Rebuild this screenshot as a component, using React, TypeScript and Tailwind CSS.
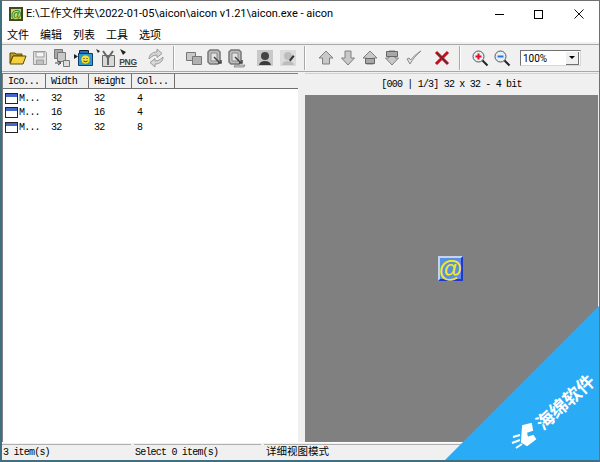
const ui = { fontFamily: 'Roboto, "Noto Sans CJK SC", sans-serif' }
const menu = { fontFamily: '"Noto Sans CJK SC", sans-serif' }
const mono = { fontFamily: '"Liberation Mono", "Noto Sans CJK SC", monospace' }

function TitleIcon() {
  return (
    <div
      className="flex h-[14px] w-[14px] shrink-0 items-center justify-center border-2 border-[#3c4a20] bg-[#d8d860] text-[11px] font-bold leading-none text-[#1c7a2c]"
      style={{ fontFamily: '"Liberation Sans", sans-serif' }}
    >
      @
    </div>
  )
}

function PreviewIcon() {
  return (
    <div
      className="relative flex h-[25px] w-[25px] shrink-0 items-center justify-center border-t-2 border-l-2 border-t-[#c4d4ee] border-l-[#c4d4ee] border-b-2 border-r-2 border-b-[#2438c8] border-r-[#2438c8] bg-[#5c8ee6] text-[24px] font-bold leading-none text-[#f4ea20]"
      style={{ fontFamily: '"Liberation Sans", sans-serif' }}
    >
      @
    </div>
  )
}

function Folder() {
  return (
    <svg width="18" height="16" viewBox="0 0 18 16">
      <path d="M1 3h5l1 1h6v2H4L1 13z" fill="#c8a020" stroke="#5a4a00" />
      <path d="M1 14l3-8h13l-3 8z" fill="#f5d040" stroke="#5a4a00" />
    </svg>
  )
}

function Save() {
  return (
    <svg width="16" height="16" viewBox="0 0 16 16">
      <path d="M1.500 1.500h12l1 1v12h-13z" fill="#e0e0e0" stroke="#9c9c9c" />
      <path d="M4 2h8v5H4z" fill="#f4f4f4" stroke="#9c9c9c" />
      <path d="M4.500 10h7v4.500h-7z" fill="#c0c0c0" stroke="#9c9c9c" />
    </svg>
  )
}

function SaveAll() {
  return (
    <svg width="18" height="20" viewBox="0 0 18 20">
      <path d="M1.500 1.500h8v9h-8z" fill="#a8a8a8" stroke="#777" />
      <path d="M4.500 4.500h8v9h-8z" fill="#c8c8c8" stroke="#777" />
      <path d="M10.500 12.500h6v6h-6z" fill="#ddd" stroke="#777" />
      <path d="M2 15h6M5 13l3 2-3 2" fill="none" stroke="#444" />
    </svg>
  )
}

function Smile() {
  return (
    <svg width="20" height="18" viewBox="0 0 20 18">
      <path d="M0 5l4 2.500L0 10z" fill="#222" />
      <path d="M5.500 1.500h9v4h-9z" fill="#1c6fb8" stroke="#123" />
      <path d="M4.500 4.500h14v12h-14z" fill="#2a9ad8" stroke="#0b3c70" />
      <circle cx="11.500" cy="10.500" r="4.500" fill="#f2e23c" stroke="#7a7000" strokeWidth="0.500" />
      <path d="M9.500 9.500h1M12.500 9.500h1M9.500 12q2 1.500 4 0" fill="none" stroke="#333" />
    </svg>
  )
}

function Import() {
  return (
    <svg width="20" height="20" viewBox="0 0 20 20">
      <path d="M0 1l4 2-2 2z" fill="#222" />
      <path d="M6.500 7.500h12v11h-12z" fill="#d8d8d8" stroke="#666" />
      <path d="M7 3l5 7 5-7M12 10v7" fill="none" stroke="#666" strokeWidth="2" />
    </svg>
  )
}

function Png() {
  return (
    <div className="flex w-[18px] flex-col items-center">
      <svg width="18" height="8" viewBox="0 0 18 8">
        <path d="M1 0l6 3-3 3z" fill="#222" />
      </svg>
      <span className="text-[8.500px] font-bold leading-[10px] tracking-[-0.3px] text-[#444] underline" style={{ fontFamily: '"Liberation Sans", sans-serif' }}>
        PNG
      </span>
    </div>
  )
}

function Reload() {
  return (
    <svg width="20" height="20" viewBox="0 0 20 20">
      <path d="M3 11c0-4 3-7 8-7V1l5 4.500-5 4V7c-3 0-5 1-8 4z" fill="#d8d8d8" stroke="#9a9a9a" />
      <path d="M17 9c0 4-3 7-8 7v3l-5-4.500 5-4V13c3 0 5-1 8-4z" fill="#d8d8d8" stroke="#9a9a9a" />
    </svg>
  )
}

function Copy() {
  return (
    <svg width="18" height="16" viewBox="0 0 18 16">
      <path d="M1.500 2.500h9v8h-9z" fill="#c8c8c8" stroke="#777" />
      <path d="M7.500 6.500h9v8h-9z" fill="#b0b0b0" stroke="#777" />
    </svg>
  )
}

function Shot({ tray }: { tray?: boolean }) {
  return (
    <svg width="20" height="20" viewBox="0 0 20 20">
      <path d="M3 4l2-2h8l2 2v10l-2 2H5l-2-2z" fill="#bdbdbd" stroke="#777" strokeWidth="1.500" />
      <path d="M6 5h6v8H6z" fill="#e4e4e4" stroke="#888" />
      <path d="M9 9l6 6M13 15h3v-3" fill="none" stroke="#444" strokeWidth="1.500" />
      {tray && <path d="M9 17h10l-1 2H8z" fill="#ccc" stroke="#777" strokeWidth="0.700" />}
    </svg>
  )
}

function Person({ light }: { light?: boolean }) {
  return (
    <div className={light ? 'flex h-4 w-4 items-end justify-center bg-[#dcdcdc]' : 'flex h-4 w-4 items-end justify-center bg-[#c8c8c8]'}>
      <svg width="16" height="16" viewBox="0 0 16 16">
        <circle cx="8" cy="6" r="4" fill={light ? '#bdbdbd' : '#444'} />
        <path d="M2 15q1-4 6-4t6 4z" fill={light ? '#bdbdbd' : '#3a3a3a'} />
        {light && <path d="M9 10l4-5 1.500 1.500-4 5z" fill="#333" />}
      </svg>
    </div>
  )
}

function Arrow({ down, box }: { down?: boolean; box?: boolean }) {
  const up = 'M8 1L1 8h3.500v6h7V8H15z'
  const dn = 'M5 1h6v7h3.500L8 15 1.500 8H5z'
  return (
    <svg width="16" height="16" viewBox="0 0 16 16">
      <path d={down ? dn : up} fill="#c8c8c8" stroke="#808080" />
      {box && <path d={down ? 'M2.500 1.500h11v5h-11z' : 'M3.500 8.500h9v5h-9z'} fill="#a8a8a8" stroke="#666" />}
    </svg>
  )
}

function Check() {
  return (
    <svg width="16" height="16" viewBox="0 0 16 16">
      <path d="M1 9l3 5C7 9 10 5 15 1 10 4 7 7 4.500 10L3 8z" fill="#e0e0e0" stroke="#8c8c8c" />
    </svg>
  )
}

function Cross() {
  return (
    <svg width="16" height="16" viewBox="0 0 16 16">
      <path d="M2 2l12 12M14 2L2 14" stroke="#c01020" strokeWidth="3" />
      <path d="M3 3l11 11" stroke="#333" strokeWidth="0.800" />
    </svg>
  )
}

function Zoom({ plus }: { plus?: boolean }) {
  return (
    <svg width="17" height="17" viewBox="0 0 17 17">
      <circle cx="6.500" cy="6.500" r="5.500" fill="#e8eef5" stroke="#555" />
      <path d="M3.500 6.500h6" stroke={plus ? '#e01020' : '#2878e0'} strokeWidth="2" />
      {plus && <path d="M6.500 3.500v6" stroke="#e01020" strokeWidth="2" />}
      <path d="M10.500 10.500l5 5" stroke="#222" strokeWidth="2" />
    </svg>
  )
}

function Tool({ children, w = 'w-[22px]', ml = '' }: { children: React.ReactNode; w?: string; ml?: string }) {
  return <div className={`flex h-[22px] shrink-0 items-center justify-center ${w} ${ml}`}>{children}</div>
}

function Sep({ ml }: { ml: string }) {
  return <div className={`h-6 w-[2px] shrink-0 border-l border-r border-l-[#a8a8a8] border-r-white ${ml}`} />
}

function RowIcon() {
  return (
    <div className="h-[11px] w-[13px] shrink-0 border border-[#222] bg-white">
      <div className="h-[3px] bg-[#4468c8]" />
    </div>
  )
}

const rows = [
  ['32', '32', '4'],
  ['16', '16', '4'],
  ['32', '32', '8'],
]

const headers = ['Ico...', 'Width', 'Height', 'Col...']

export default function App() {
  return (
    <div className="relative flex h-[462px] w-[600px] flex-col overflow-hidden border-t border-l-2 border-r border-b-2 border-t-[#707070] border-l-[#3f6f80] border-r-[#707070] border-b-[#3f6f80] bg-[#f0f0f0] text-black">
      {/* title bar */}
      <div className="flex h-[26px] shrink-0 items-center bg-white pl-[7px] text-[11px]" style={ui}>
        <TitleIcon />
        <span className="ml-[3px] whitespace-nowrap">E:\工作文件夹\2022-01-05\aicon\aicon v1.21\aicon.exe - aicon</span>
        <div className="ml-auto flex items-center">
          <div className="mr-[30px] h-px w-[9px] bg-black" />
          <div className="mr-[31px] h-[9px] w-[9px] border border-black" />
          <svg width="10" height="10" viewBox="0 0 10 10" className="mr-[15px]">
            <path d="M0.500 0.500l9 9M9.500 0.500l-9 9" stroke="#111" />
          </svg>
        </div>
      </div>

      {/* menu */}
      <div className="flex h-[15px] shrink-0 items-center gap-[9px] bg-white pl-[5px] text-[11px]" style={menu}>
        {['文件', '编辑', '列表', '工具', '选项'].map(m => (
          <span key={m} className="w-[24px] leading-none">{m}</span>
        ))}
      </div>

      {/* toolbar */}
      <div className="mt-[2px] flex h-[28px] shrink-0 items-center border-t border-b border-t-[#a8a8a8] border-b-[#a8a8a8] bg-[#f0f0f0] pl-[5px]">
        <Tool><Folder /></Tool>
        <Tool><Save /></Tool>
        <Tool><SaveAll /></Tool>
        <Tool><Smile /></Tool>
        <Tool><Import /></Tool>
        <Tool><Png /></Tool>
        <Tool ml="ml-[6px]"><Reload /></Tool>
        <Sep ml="ml-[6px]" />
        <Tool w="w-[21px]" ml="ml-[8px]"><Copy /></Tool>
        <Tool w="w-[21px]"><Shot /></Tool>
        <Tool w="w-[21px]"><Shot tray /></Tool>
        <Tool w="w-[23px]" ml="ml-[7px]"><Person /></Tool>
        <Tool w="w-[23px]"><Person light /></Tool>
        <Sep ml="ml-[5px]" />
        <Tool ml="ml-[9px]"><Arrow /></Tool>
        <Tool><Arrow down /></Tool>
        <Tool><Arrow box /></Tool>
        <Tool><Arrow down box /></Tool>
        <Tool><Check /></Tool>
        <Tool ml="ml-[6px]"><Cross /></Tool>
        <Sep ml="ml-[6px]" />
        <Tool ml="ml-[8px]"><Zoom plus /></Tool>
        <Tool><Zoom /></Tool>
        <div className="ml-[7px] flex h-[16px] w-[61px] items-center justify-between border border-t-[#707070] border-l-[#707070] border-r-[#d8d8d8] border-b-[#d8d8d8] bg-white pl-[2px] pr-px text-[10px]" style={ui}>
          <span>100%</span>
          <div className="flex h-[13px] w-[13px] items-center justify-center border-r border-b border-r-[#707070] border-b-[#707070] bg-[#f0f0f0]">
            <div className="h-0 w-0 border-x-[3px] border-t-[3px] border-x-transparent border-t-black" />
          </div>
        </div>
      </div>

      {/* panels */}
      <div className="flex min-h-0 flex-1 pt-px">
        <div className="flex w-[296px] shrink-0 flex-col border-t border-l border-t-[#808080] border-l-[#808080] bg-white text-[10px] tracking-[-0.8px]" style={mono}>
          <div className="flex h-[15px] shrink-0 bg-[#f0f0f0]">
            {headers.map(h => (
              <div key={h} className="flex w-[43px] items-center border-r border-b border-r-[#707070] border-b-[#707070] pl-[5px]">
                {h}
              </div>
            ))}
            <div className="flex-1 border-b border-b-[#707070]" />
          </div>
          <div className="pt-[2px]">
            {rows.map((r, i) => (
              <div key={i} className="flex h-[14.500px] items-center">
                <div className="flex w-[43px] items-center gap-px pl-[2px]">
                  <RowIcon />
                  <span>M...</span>
                </div>
                {r.map((c, j) => (
                  <div key={j} className="w-[43px] pl-[5px]">{c}</div>
                ))}
              </div>
            ))}
          </div>
        </div>

        <div className="ml-[7px] mr-px flex min-w-0 flex-1 flex-col">
          <div className="flex h-[22px] shrink-0 items-center justify-center border-t border-t-[#d0d0d0] bg-[#f0f0f0] text-[10px] tracking-[-0.8px]" style={mono}>
            [000 | 1/3] 32 x 32 - 4 bit
          </div>
          <div className="flex flex-1 items-center justify-center bg-[#808080]">
            <div className="mr-[2px]">
              <PreviewIcon />
            </div>
          </div>
        </div>
      </div>

      {/* status bar */}
      <div className="flex h-[18px] shrink-0 gap-[3px] border-t border-t-white pt-px text-[10px] tracking-[-0.8px]" style={mono}>
        <div className="flex w-[129px] items-center border-t border-t-[#b0b0b0] pl-px">3 item(s)</div>
        <div className="flex w-[127px] items-center border-t border-t-[#b0b0b0] pl-px">Select 0 item(s)</div>
        <div className="flex flex-1 items-center border-t border-t-[#b0b0b0] pl-[2px] text-[10.500px] tracking-normal">详细视图模式</div>
      </div>

      {/* watermark */}
      <div className="absolute right-[-1px] bottom-[-2px] h-[157px] w-[157px] bg-[#29abf5] [clip-path:polygon(100%_0,100%_100%,0_100%)]">
        <div
          className="absolute left-[83px] top-[81px] w-[90px] -rotate-[42deg] whitespace-nowrap text-[18px] font-bold leading-none text-white"
          style={{ fontFamily: '"Noto Sans CJK SC", sans-serif' }}
        >
          海绵软件
        </div>
        <svg width="28" height="26" viewBox="0 0 28 26" className="absolute left-[68px] top-[118px]">
          <path d="M12 3l8-2 1 6-6 2 1 6 6-2 2 3-8 6-5-3zM2 14l7-2M1 20l8-3M5 25l6-4" fill="#fff" stroke="#fff" strokeWidth="2" />
        </svg>
      </div>
    </div>
  )
}
